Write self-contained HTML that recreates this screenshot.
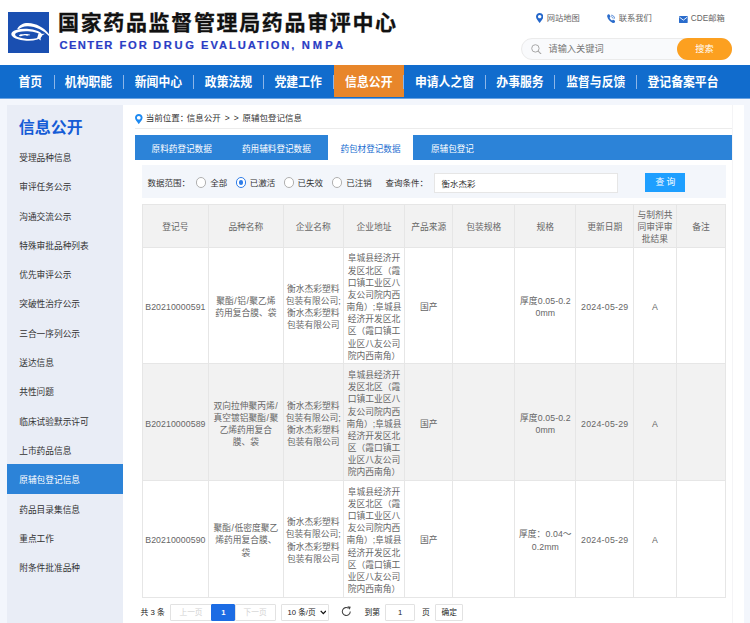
<!DOCTYPE html>
<html lang="zh-CN"><head><meta charset="utf-8">
<title>原辅包登记信息</title>
<style>
*{box-sizing:border-box;margin:0;padding:0}
html,body{width:750px;height:623px;overflow:hidden;background:#fff}
body{font-family:"Liberation Sans","Noto Sans CJK SC",sans-serif;color:#333;position:relative;font-size:8.6px}
.abs{position:absolute}
#logo{left:7.5px;top:12px;width:41px;height:40.5px;background:#1a4fb1;overflow:hidden}
#title{left:58px;top:8px;font-size:21px;font-weight:bold;color:#111;-webkit-text-stroke:0.3px #111;letter-spacing:1.65px;line-height:30px;white-space:nowrap}
#sub{left:58px;top:37px;font-size:11.2px;font-weight:bold;color:#2a3cc4;line-height:16px;white-space:nowrap;width:300px;height:16px;-webkit-text-stroke:0.2px #2a3cc4}
#sub span{position:absolute;top:0}
.toplink{top:12.7px;font-size:8.25px;color:#666;line-height:12px;white-space:nowrap}
#search{left:521px;top:38px;width:211px;height:21.5px;border-radius:11px;border:1px solid #ebebeb;background:#f9fafc}
#search span{position:absolute;left:26.5px;top:4px;font-size:9.2px;color:#777;line-height:12px;white-space:nowrap}
#sbtn{left:677px;top:38px;width:55px;height:21.5px;border-radius:11px;background:#fca020;color:#fff;font-size:9.2px;text-align:center;line-height:22.6px}
#nav{left:0;top:65px;width:750px;height:33px;background:#116ccd;border-bottom:0 solid #6aa2e1}
#nav .it{position:absolute;top:0;height:33px;line-height:33px;color:#fff;font-weight:bold;font-size:11.85px;white-space:nowrap;transform:translate(-50%,0.4px) scaleY(1.07)}
#nav .sep{position:absolute;top:9.5px;width:1px;height:14px;background:#8db6e8}
#nav .act{position:absolute;left:334px;top:0;width:69.7px;height:32px;background:#e8862a}
#bg{left:0;top:98px;width:750px;height:525px;background:#f3f6fc;border-top:1px solid #6aa3e2}
#side{left:7.4px;top:104.6px;width:115.6px;height:519px;background:#e9edf6}
#side h2{position:absolute;left:11.3px;top:12.1px;font-size:16px;color:#155cd6;font-weight:bold;line-height:22px;white-space:nowrap}
#side .m{position:absolute;left:11.8px;margin-top:0.5px;font-size:8.7px;color:#333;line-height:12px;height:12px;white-space:nowrap}
#side .sel{position:absolute;left:0;top:359.8px;width:115.6px;height:29.6px;background:#2c83d8}
#main{left:122.9px;top:104.6px;width:621.3px;height:519px;background:#fff}
#crumb{left:145.8px;top:112.3px;font-size:8.5px;line-height:12px;color:#333;white-space:nowrap;word-spacing:1.65px}
#cline{left:135.3px;top:128.4px;width:596.4px;height:1px;background:#ececec}
#tabs{left:135.3px;top:135.2px;width:596.4px;height:24.4px;background:#2c83d8}
#tabs .t{position:absolute;top:1.7px;height:24px;line-height:24px;color:#fff;font-size:8.6px;white-space:nowrap;transform:translateX(-50%)}
#tabs .on{position:absolute;left:192.7px;top:0;width:85px;height:24.4px;background:#fff}
#q{left:141.6px;top:165.4px;width:584px;height:32.8px;background:#f3f6fb}
.ql{top:176.6px;font-size:8.5px;line-height:12px;color:#333;white-space:nowrap}
.rad{width:10.2px;height:10.2px;border-radius:50%;border:0.8px solid #b0b0b0;background:#fff;top:177.4px}
.rad.ck{border:1px solid #2f7de8}
.rad.ck::after{content:"";position:absolute;left:1.8px;top:1.8px;width:4.6px;height:4.6px;border-radius:50%;background:#2f7de8}
#qin{left:434px;top:172.6px;width:183.7px;height:20.3px;background:#fff;border:1px solid #e6e6e6}
#qin span{position:absolute;left:6.5px;top:4px;font-size:8.5px;line-height:12px;color:#333}
#qbtn{left:645.4px;top:172.6px;width:40px;height:19.6px;background:#1e9fff;color:#fff;font-size:8.8px;text-align:center;line-height:19.5px;letter-spacing:2px;text-indent:2px}
table{position:absolute;left:141.6px;top:204.1px;border-collapse:collapse;table-layout:fixed;width:583.6px;font-size:8.75px;color:#666;line-height:12.15px}
td,th{border:1px solid #e6e6e6;text-align:center;vertical-align:middle;font-weight:normal;padding:0;overflow:hidden;white-space:nowrap}
th{height:42.6px;background:#f2f2f2;padding-top:2.8px}
td{height:116.7px;padding-top:3.3px}
.sl{padding:0 0.5px}
.ls{letter-spacing:0.27px}
.li{letter-spacing:0.08px}
tr.alt td{background:#f2f2f2}
.pg{font-size:7.8px;color:#222;line-height:12px;white-space:nowrap}
.pb{top:603.8px;height:17px;border:1px solid #e2e2e2;border-radius:1px;background:#fff;text-align:center;line-height:16.4px;font-size:7.7px;color:#d2d2d2}
</style></head><body>
<div class="abs" id="logo"><svg width="41" height="40.5" viewBox="0 0 41 40.5" style="display:block">
<path d="M9.2,17 C11.5,12.8 15.5,11 20,11.1 C28.5,11.3 36.5,15.8 41.5,23 L41.5,24.6 C36,18.3 28,14.7 20,14.3 C16,14.1 12.6,15.4 10.3,17.6 Z" fill="#fff"/>
<g transform="rotate(2.5 19 22.5)">
<ellipse cx="18.7" cy="22.7" rx="15.4" ry="6.0" fill="#fff"/>
<ellipse cx="19.7" cy="23.0" rx="12.6" ry="3.85" fill="#1a4fb1"/>
<path d="M30.3,21.6 L36.9,20.9 C34.6,22.3 33.4,23.5 32.9,24.4 C32.7,25.5 32.7,26.6 33.1,27.9 L29.3,25.6 Z" fill="#fff"/>
<path d="M11,23.9 C11.4,22.6 13.6,22.3 15.3,22.5 C17.1,22 20.6,22 22.3,22.7 C21.6,23.3 20.9,23.4 20.3,23.2 C19.5,24 18.1,23.9 17.5,23.4 C15.9,23.4 14.6,23.6 13.7,24.3 C12.6,24.7 11.3,24.6 11,23.9 Z" fill="#fff"/>
</g>
</svg></div>
<div class="abs" id="title">国家药品监督管理局药品审评中心</div>
<div class="abs" id="sub"><span style="left:1.5px;letter-spacing:1.36px">CENTER</span> <span style="left:61.4px;letter-spacing:1.85px">FOR</span> <span style="left:95.1px;letter-spacing:2.6px">DRUG</span> <span style="left:143.1px;letter-spacing:1.92px">EVALUATION,</span> <span style="left:243.7px;letter-spacing:3.07px">NMPA</span></div>
<div class="abs toplink" style="left:546.8px">网站地图</div>
<div class="abs toplink" style="left:618.8px">联系我们</div>
<div class="abs toplink" style="left:690.8px">CDE邮箱</div>
<svg class="abs" style="left:535.7px;top:13.4px" width="7.4" height="10" viewBox="0 0 7.4 10"><path d="M3.7,0 C1.6,0 0,1.6 0,3.65 C0,5.8 2.1,7.6 3.7,10 C5.3,7.6 7.4,5.8 7.4,3.65 C7.4,1.6 5.8,0 3.7,0 Z M3.7,1.95 A1.7,1.7 0 1 1 3.69,1.95 Z" fill="#2467cb" fill-rule="evenodd"/></svg>
<svg class="abs" style="left:606.8px;top:14.2px" width="8.6" height="9.2" viewBox="0 0 8.6 9.2"><path d="M1.5,0.3 C0.6,0.7 0,1.5 0.2,2.6 C0.7,5.4 3,8 5.8,8.9 C6.9,9.2 7.8,8.7 8.3,7.9 C8.5,7.5 8.4,7.1 8,6.8 L6.7,5.9 C6.3,5.6 5.9,5.7 5.6,6 L5.1,6.5 C3.9,5.9 3,4.9 2.5,3.7 L3.1,3.2 C3.4,2.9 3.5,2.5 3.3,2.1 L2.6,0.7 C2.4,0.3 1.9,0.1 1.5,0.3 Z" fill="#2a6ccc"/><path d="M4.6,1.2 C6.3,1.3 7.5,2.6 7.6,4.2 M4.7,2.8 C5.5,2.9 6,3.5 6.1,4.2" stroke="#2a6ccc" stroke-width="0.8" fill="none" stroke-linecap="round"/></svg>
<svg class="abs" style="left:679px;top:15.8px" width="8.7" height="6.9" viewBox="0 0 8.7 6.9"><rect width="8.7" height="6.9" rx="0.4" fill="#2a6ccc"/><path d="M0.5,1.2 L4.35,4.1 L8.2,1.2" stroke="#fff" stroke-width="0.9" fill="none"/></svg>
<div class="abs" id="search"><span>请输入关键词</span></div>
<svg class="abs" style="left:531.3px;top:43.5px" width="10.5" height="10.5" viewBox="0 0 10.5 10.5"><circle cx="4.4" cy="4.4" r="3.7" stroke="#a8a8a8" stroke-width="1" fill="none"/><path d="M7.2,7.2 L9.9,9.9" stroke="#a8a8a8" stroke-width="1.1" stroke-linecap="round"/></svg>
<div class="abs" id="sbtn">搜索</div>
<div class="abs" id="nav">
<div class="act"></div>
<div class="sep" style="left:53.5px"></div><div class="sep" style="left:123.2px"></div><div class="sep" style="left:193px"></div><div class="sep" style="left:263px"></div><div class="sep" style="left:333.2px"></div><div class="sep" style="left:403.4px"></div><div class="sep" style="left:484.8px"></div><div class="sep" style="left:554.3px"></div><div class="sep" style="left:635.8px"></div>
<div class="it" style="left:30.3px">首页</div>
<div class="it" style="left:88.5px">机构职能</div>
<div class="it" style="left:158.4px">新闻中心</div>
<div class="it" style="left:228.5px">政策法规</div>
<div class="it" style="left:298.2px">党建工作</div>
<div class="it" style="left:368.8px">信息公开</div>
<div class="it" style="left:444.5px">申请人之窗</div>
<div class="it" style="left:520px">办事服务</div>
<div class="it" style="left:595.8px">监督与反馈</div>
<div class="it" style="left:683px">登记备案平台</div>
</div>
<div class="abs" id="bg"></div>
<div class="abs" id="side"><h2>信息公开</h2>
<div class="sel"></div>
<div class="m" style="top:46.9px">受理品种信息</div>
<div class="m" style="top:76.2px">审评任务公示</div>
<div class="m" style="top:105.5px">沟通交流公示</div>
<div class="m" style="top:134.8px">特殊审批品种列表</div>
<div class="m" style="top:164.1px">优先审评公示</div>
<div class="m" style="top:193.4px">突破性治疗公示</div>
<div class="m" style="top:222.7px">三合一序列公示</div>
<div class="m" style="top:252px">送达信息</div>
<div class="m" style="top:281.3px">共性问题</div>
<div class="m" style="top:310.6px">临床试验默示许可</div>
<div class="m" style="top:339.9px">上市药品信息</div>
<div class="m" style="top:369.2px;color:#fff">原辅包登记信息</div>
<div class="m" style="top:398.5px">药品目录集信息</div>
<div class="m" style="top:427.8px">重点工作</div>
<div class="m" style="top:457.1px">附条件批准品种</div>
</div>
<div class="abs" id="main"></div>
<svg class="abs" style="left:135.3px;top:113.5px" width="7.6" height="10.2" viewBox="0 0 7.6 10.2"><path d="M3.8,0 C1.65,0 0,1.65 0,3.75 C0,5.95 2.2,7.8 3.8,10.2 C5.4,7.8 7.6,5.95 7.6,3.75 C7.6,1.65 5.95,0 3.8,0 Z M3.8,1.9 A1.85,1.85 0 1 1 3.79,1.9 Z" fill="#1e8af2" fill-rule="evenodd"/></svg>
<div class="abs" style="left:732px;top:105px;width:1px;height:518px;background:#f4f4f6"></div>
<div class="abs" id="crumb">当前位置<span style="margin-right:-1.7px">：</span>信息公开 &gt; &gt; 原辅包登记信息</div>
<div class="abs" id="cline"></div>
<div class="abs" id="tabs"><div class="on"></div>
<div class="t" style="left:46.4px">原料药登记数据</div>
<div class="t" style="left:141.1px">药用辅料登记数据</div>
<div class="t" style="left:235.2px;color:#1c6fd1">药包材登记数据</div>
<div class="t" style="left:317.2px">原辅包登记</div>
</div>
<div class="abs" id="q"></div>
<div class="abs ql" style="left:147.4px">数据范围：</div>
<div class="abs rad" style="left:195.9px"></div><div class="abs ql" style="left:210.3px">全部</div>
<div class="abs rad ck" style="left:235.9px"></div><div class="abs ql" style="left:249.8px">已激活</div>
<div class="abs rad" style="left:283.8px"></div><div class="abs ql" style="left:297.6px">已失效</div>
<div class="abs rad" style="left:332.3px"></div><div class="abs ql" style="left:346.3px">已注销</div>
<div class="abs ql" style="left:385.5px">查询条件：</div>
<div class="abs" id="qin"><span>衡水杰彩</span></div>
<div class="abs" id="qbtn">查询</div>
<table>
<colgroup><col style="width:66.6px"><col style="width:74.4px"><col style="width:60.4px"><col style="width:61.1px"><col style="width:48.3px"><col style="width:62px"><col style="width:60.9px"><col style="width:58px"><col style="width:42.4px"><col style="width:49.5px"></colgroup>
<tr><th>登记号</th><th>品种名称</th><th>企业名称</th><th>企业地址</th><th>产品来源</th><th>包装规格</th><th>规格</th><th>更新日期</th><th>与制剂共<br>同审评审<br>批结果</th><th>备注</th></tr>
<tr><td class="li">B20210000591</td><td>聚酯<span class="sl">/</span>铝<span class="sl">/</span>聚乙烯<br>药用复合膜、袋</td><td>衡水杰彩塑料<br>包装有限公司;<br>衡水杰彩塑料<br>包装有限公司</td><td>阜城县经济开<br>发区北区（霞<br>口镇工业区八<br>友公司院内西<br>南角）;阜城县<br>经济开发区北<br>区（霞口镇工<br>业区八友公司<br>院内西南角）</td><td>国产</td><td></td><td style="letter-spacing:0.1px">厚度0.05-0.2<br>0mm</td><td class="ls">2024-05-29</td><td>A</td><td></td></tr>
<tr class="alt"><td class="li">B20210000589</td><td>双向拉伸聚丙烯<span class="sl">/</span><br>真空镀铝聚酯<span class="sl">/</span>聚<br>乙烯药用复合<br>膜、袋</td><td>衡水杰彩塑料<br>包装有限公司;<br>衡水杰彩塑料<br>包装有限公司</td><td>阜城县经济开<br>发区北区（霞<br>口镇工业区八<br>友公司院内西<br>南角）;阜城县<br>经济开发区北<br>区（霞口镇工<br>业区八友公司<br>院内西南角）</td><td>国产</td><td></td><td style="letter-spacing:0.1px">厚度0.05-0.2<br>0mm</td><td class="ls">2024-05-29</td><td>A</td><td></td></tr>
<tr><td class="li">B20210000590</td><td>聚酯<span class="sl">/</span>低密度聚乙<br>烯药用复合膜、<br>袋</td><td>衡水杰彩塑料<br>包装有限公司;<br>衡水杰彩塑料<br>包装有限公司</td><td>阜城县经济开<br>发区北区（霞<br>口镇工业区八<br>友公司院内西<br>南角）;阜城县<br>经济开发区北<br>区（霞口镇工<br>业区八友公司<br>院内西南角）</td><td>国产</td><td></td><td style="letter-spacing:0.1px">厚度：0.04～<br>0.2mm</td><td class="ls">2024-05-29</td><td>A</td><td></td></tr>
</table>
<div class="abs pg" style="left:140.5px;top:607px">共 3 条</div>
<div class="abs pb" style="left:170.1px;width:41.8px">上一页</div>
<div class="abs pb" style="left:234.7px;width:40.9px">下一页</div>
<div class="abs pb" style="left:211.4px;width:23.8px;background:#1c6ce4;border-color:#1c6ce4;color:#fff;font-weight:bold">1</div>
<div class="abs pb" style="left:281.2px;width:48.2px;color:#222;text-align:left;padding-left:5.3px">10 条/页</div>
<svg class="abs" style="left:319.6px;top:609.6px" width="6.6" height="5" viewBox="0 0 6.6 5"><path d="M0.7,0.9 L3.3,3.6 L5.9,0.9" stroke="#111" stroke-width="1.3" fill="none"/></svg>
<svg class="abs" style="left:341.2px;top:606.4px" width="11" height="11" viewBox="0 0 11 11"><path d="M9.3,5.6 A4,4 0 1 1 7.6,2.2" stroke="#444" stroke-width="1.05" fill="none"/><path d="M6.4,0.2 L9.8,0.8 L8.7,3.8 Z" fill="#444"/></svg>
<div class="abs pg" style="left:364.4px;top:607px">到第</div>
<div class="abs pb" style="left:385.4px;width:29.4px;color:#222">1</div>
<div class="abs pg" style="left:422px;top:607px">页</div>
<div class="abs pb" style="left:435.2px;width:28px;color:#222">确定</div>
</body></html>
